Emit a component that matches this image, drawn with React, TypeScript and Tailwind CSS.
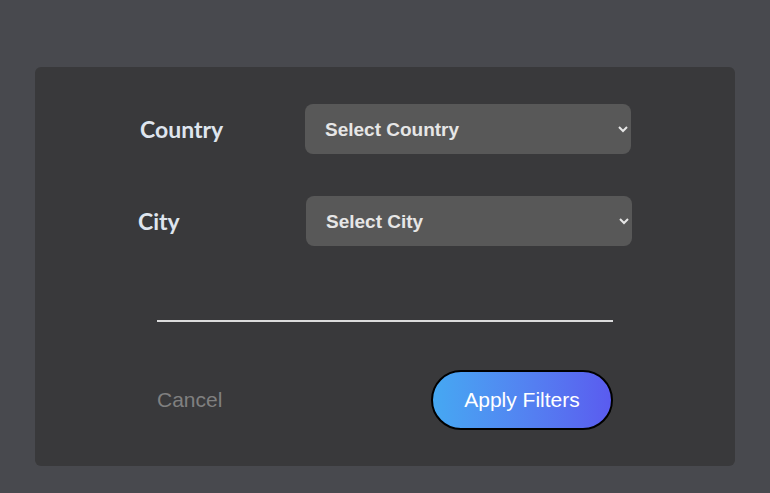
import React from 'react';

export default function App() {
  return (
    <div className="w-[770px] h-[493px] bg-[#48494e] pt-[67px] px-[35px]">
      <div className="h-[399px] rounded-[6px] bg-[#39393b] px-[122px] pt-[37px]">
        <div className="-ml-[17px] flex items-center">
          <label className="w-[165px] shrink-0 text-[23px] font-bold text-[#dfe5ee]" style={{ fontFamily: 'Lato, sans-serif' }}>
            Country
          </label>
          <select className="h-[50px] w-[326px] shrink-0 rounded-[8px] bg-[#585858] pl-[16px] pr-[4px] text-[19px] font-bold text-[#e6e6e6] outline-none" style={{ fontFamily: '"Liberation Sans", Arial, sans-serif' }}>
            <option>Select Country</option>
          </select>
        </div>
        <div className="-ml-[19px] mt-[42px] flex items-center">
          <label className="w-[168px] shrink-0 text-[23px] font-bold text-[#dfe5ee]" style={{ fontFamily: 'Lato, sans-serif' }}>
            City
          </label>
          <select className="h-[50px] w-[326px] shrink-0 rounded-[8px] bg-[#585858] pl-[16px] pr-[4px] text-[19px] font-bold text-[#e6e6e6] outline-none" style={{ fontFamily: '"Liberation Sans", Arial, sans-serif' }}>
            <option>Select City</option>
          </select>
        </div>
        <div className="mt-[74px] h-[2px] bg-[#dcdcdc]" />
        <div className="mt-[48px] flex items-center justify-between" style={{ fontFamily: '"Liberation Sans", Arial, sans-serif' }}>
          <button className="text-[21px] text-[#808080]">Cancel</button>
          <button className="h-[60px] w-[182px] rounded-full border-2 border-black bg-gradient-to-r from-[#45a8f2] to-[#5a5bef] text-[21px] text-white">
            Apply Filters
          </button>
        </div>
      </div>
    </div>
  );
}
